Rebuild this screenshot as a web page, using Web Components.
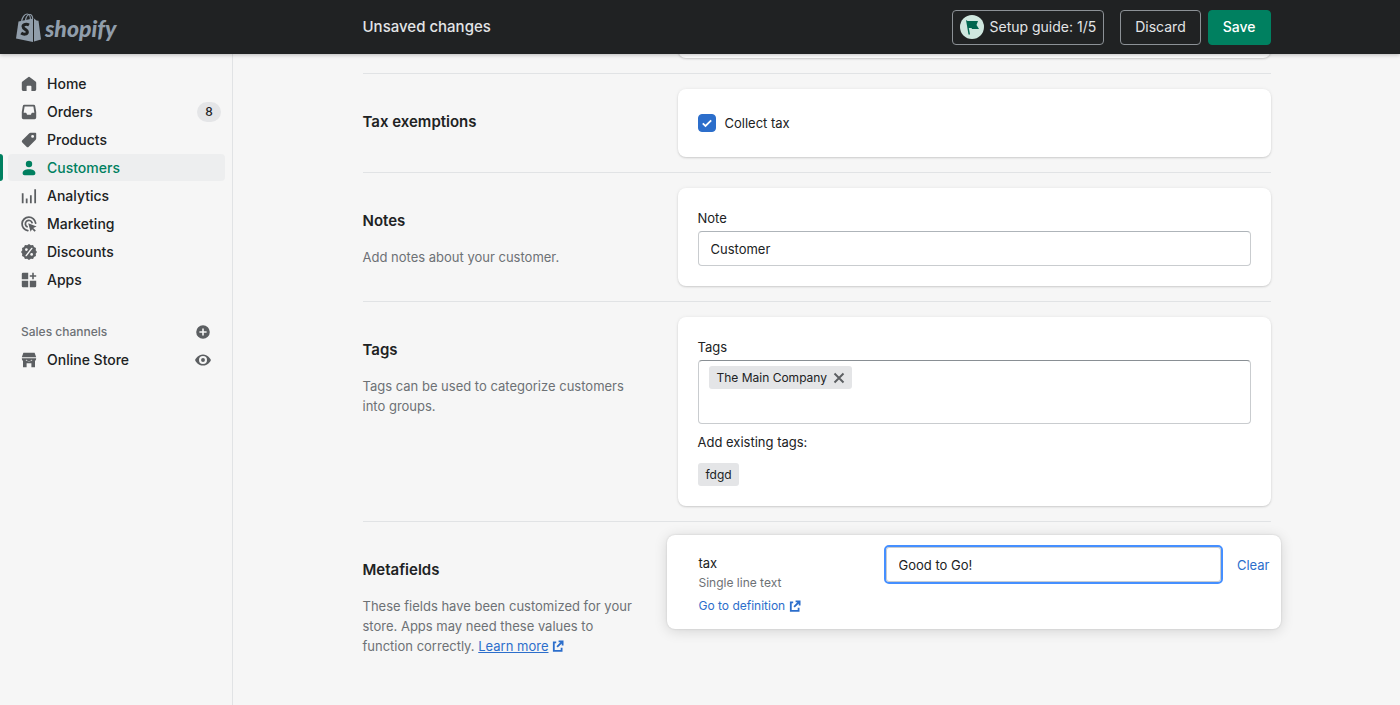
<!DOCTYPE html>
<html lang="en">
<head>
<meta charset="utf-8">
<meta name="viewport" content="width=device-width, initial-scale=1">
<title>Customer · Unsaved changes</title>
<style>
  :root {
    --ink: #202223;
    --subdued: #6d7175;
    --icon: #5c5f62;
    --green: #008060;
    --blue: #2c6ecb;
    --line: #e1e3e5;
    --page: #f6f6f6;
    --chip: #e4e5e7;
    --content: 908px;
    --nav: 233px;
  }
  body {
    margin: 0;
    background: var(--page);
    color: var(--ink);
    font: 13px/20px Inter, "Liberation Sans", sans-serif;
  }
</style>
</head>
<body>

<admin-frame>
  <top-bar slot="top" heading="Unsaved changes"></top-bar>

  <side-nav slot="nav">
    <nav-item icon="home">Home</nav-item>
    <nav-item icon="orders" badge="8">Orders</nav-item>
    <nav-item icon="products">Products</nav-item>
    <nav-item icon="customers" current>Customers</nav-item>
    <nav-item icon="analytics">Analytics</nav-item>
    <nav-item icon="marketing">Marketing</nav-item>
    <nav-item icon="discounts">Discounts</nav-item>
    <nav-item icon="apps">Apps</nav-item>
    <nav-heading slot="channels" action="Add sales channel">Sales channels</nav-heading>
    <nav-item slot="channels" icon="store" action="View your online store">Online Store</nav-item>
  </side-nav>

  <ui-card class="previous" empty></ui-card>

  <annotated-section heading="Tax exemptions">
    <ui-card roomy><check-field label="Collect tax"></check-field></ui-card>
  </annotated-section>

  <annotated-section heading="Notes">
    <span slot="about">Add notes about your customer.</span>
    <ui-card><text-field label="Note" value="Customer"></text-field></ui-card>
  </annotated-section>

  <annotated-section heading="Tags">
    <span slot="about">Tags can be used to categorize customers into groups.</span>
    <ui-card>
      <tag-field label="Tags">
        <tag-chip removable>The Main Company</tag-chip>
        <span slot="hint">Add existing tags:</span>
        <tag-chip slot="existing">fdgd</tag-chip>
      </tag-field>
    </ui-card>
  </annotated-section>

  <annotated-section heading="Metafields">
    <span slot="about">These fields have been customized for your store. Apps may need these values to function correctly.&#32;</span>
    <ext-link slot="about" underlined label="Learn more"></ext-link>
    <metafield-row name="tax" kind="Single line text" value="Good to Go!"></metafield-row>
  </annotated-section>
</admin-frame>

<script>
  const ICONS = {
    home: '<path d="M10.7 1.3a1.2 1.2 0 0 0-1.4 0L1.8 6.8A2 2 0 0 0 1 8.4V17a1.6 1.6 0 0 0 1.6 1.6H7v-5.4a1 1 0 0 1 1-1h4a1 1 0 0 1 1 1v5.4h4.4A1.6 1.6 0 0 0 19 17V8.4a2 2 0 0 0-.8-1.6z"/>',
    orders: '<path fill-rule="evenodd" d="M4.2 1h11.6A2 2 0 0 1 17.800 2.700L19 10v7a2 2 0 0 1-2 2H3a2 2 0 0 1-2-2v-7l1.200-7.300A2 2 0 0 1 4.200 1zM4.500 3.200 3.300 11H6a1 1 0 0 1 1 .8l.3 1a1 1 0 0 0 1 .7h3.400a1 1 0 0 0 1-.7l.3-1a1 1 0 0 1 1-.8h2.700l-1.200-7.800z"/>',
    products: '<path fill-rule="evenodd" d="M10.400 1.600A2 2 0 0 1 11.800 1H18a1 1 0 0 1 1 1v6.200a2 2 0 0 1-.6 1.400l-8.700 8.800a2 2 0 0 1-2.800 0l-5.300-5.300a2 2 0 0 1 0-2.800zM14.500 7.300a1.800 1.800 0 1 0 0-3.600 1.800 1.800 0 0 0 0 3.600z"/>',
    customers: '<circle cx="10" cy="5" r="4"/><path d="M2 16.500c0-3.500 3.500-5 8-5s8 1.500 8 5c0 1.500-1 2.500-2.500 2.500h-11C3 19 2 18 2 16.500z"/>',
    analytics: '<path d="M1 6.500h2.200V19H1zM6 13h2.200v6H6zM11.200 9h2.200v10h-2.200zM16.600 1.500h2.200V19h-2.200z"/>',
    marketing: '<g fill="none" stroke="currentColor" stroke-width="2.200" stroke-linecap="round"><path d="M8.500 18.300A8.500 8.500 0 1 1 18.300 9"/><path d="M7.600 13.500A4.300 4.300 0 1 1 13.800 8.300"/></g><path d="m9 9 10.500 4-4.200 2 3.200 3.200-1.500 1.500-3.200-3.200L12 19.800z"/>',
    discounts: '<path d="m10 0 2.300 1.600 2.800-.3 1.100 2.500 2.500 1.100-.3 2.800L20 10l-1.600 2.300.3 2.800-2.500 1.100-1.100 2.500-2.800-.3L10 20l-2.300-1.600-2.800.3-1.100-2.500-2.500-1.100.3-2.800L0 10l1.600-2.300-.3-2.800 2.500-1.100 1.100-2.500 2.800.3z"/><g stroke="#f6f6f6" stroke-width="1.800" stroke-linecap="round"><path d="m6.500 14.500 7-9"/></g><circle cx="6.700" cy="7" r="1.700" fill="#f6f6f6"/><circle cx="13.300" cy="13" r="1.700" fill="#f6f6f6"/>',
    apps: '<path d="M2.500 1H9v8H1V2.500A1.500 1.500 0 0 1 2.500 1zM1 11h8v8H2.500A1.500 1.500 0 0 1 1 17.500zM11 11h8v6.500a1.500 1.500 0 0 1-1.500 1.500H11zM14 1h2v3h3v2h-3v3h-2V6h-3V4h3z"/>',
    store: '<path d="M3 1h14l2 5.500H1zM1 7.800h18c0 2.200-1.300 3.700-3 3.700s-3-1-3-2.500c0 1.500-1.300 2.500-3 2.500S7 10.500 7 9c0 1.500-1.300 2.500-3 2.500s-3-1.500-3-3.700z"/><path d="M2.500 11h4l3.500 1 3.500-1h4v8H13v-5H7v5H2.500z"/>',
    plus: '<path fill-rule="evenodd" d="M10 1.500a8.500 8.500 0 1 0 0 17 8.500 8.500 0 0 0 0-17zM9 5.500h2V9h3.500v2H11v3.500H9V11H5.500V9H9z"/>',
    eye: '<path fill-rule="evenodd" d="M10 3C4 3 .8 8.300.3 9.500a1.200 1.200 0 0 0 0 1C.8 11.700 4 17 10 17s9.200-5.300 9.700-6.500a1.200 1.200 0 0 0 0-1C19.200 8.300 16 3 10 3zm0 12a5 5 0 1 1 0-10 5 5 0 0 1 0 10z"/><circle cx="10" cy="10" r="2.400"/>',
    close: '<path d="m2.500 2.500 15 15m0-15-15 15" fill="none" stroke="currentColor" stroke-width="3.200"/>',
    external: '<g fill="none" stroke="currentColor" stroke-width="3"><path d="M7 4H3v14h13v-5"/><path d="M11 2.300h6.700V9M17.500 2.500 8.500 11.500"/></g>',
    check: '<path d="m3 10.500 4.500 4.500L17 5.500" fill="none" stroke="currentColor" stroke-width="3"/>'
  };
  const icon = (name, size = 16) =>
    `<svg viewBox="0 0 20 20" width="${size}" height="${size}" fill="currentColor" aria-hidden="true">${ICONS[name]}</svg>`;

  const define = (tag, render) => customElements.define(tag, class extends HTMLElement {
    constructor() {
      super();
      this.attachShadow({ mode: 'open' });
    }
    connectedCallback() {
      const attr = (name) => this.getAttribute(name) ?? '';
      this.shadowRoot.innerHTML = '<style>*{box-sizing:border-box}svg{display:block;flex:none}button,input{font:inherit;color:inherit}</style>' + render(attr, this);
    }
  });

  define('admin-frame', () => `
    <style>
      :host { display: grid; grid-template: 54px 1fr / var(--nav) 1fr; min-height: 100vh; }
      header { grid-column: 1 / -1; position: sticky; top: 0; z-index: 2; }
      aside { border-right: 1px solid var(--line); }
      main { padding: 0 20px; }
      .column { max-width: var(--content); margin: 0 auto; }
      ::slotted(.previous) { height: 24px; margin: -20px 0 15px 315px; }
    </style>
    <header><slot name="top"></slot></header>
    <aside><slot name="nav"></slot></aside>
    <main><div class="column"><slot></slot></div></main>`);

  define('top-bar', (attr) => `
    <style>
      :host { display: grid; grid-template-columns: var(--nav) 1fr; align-items: center; height: 54px;
              background: var(--ink); color: #e3e5e7; box-shadow: 0 1px 4px rgba(0,0,0,.25); }
      .brand { display: flex; align-items: center; gap: 4px; padding-left: 16px; color: #919eab; text-decoration: none;
               font: italic 900 23px/28px Lato, sans-serif; }
      .brand span { padding-top: 2px; }
      .area { padding: 0 20px; }
      .bar { display: flex; align-items: center; max-width: var(--content); margin: 0 auto; }
      h1 { flex: 1; margin: 0; font-size: 15px; line-height: 24px; font-weight: 500; }
      button { display: flex; align-items: center; height: 35px; border: 1px solid #8c9196; border-radius: 4px;
               padding: 0 14px; background: none; font-size: 14px; white-space: nowrap; }
      .guide { gap: 5px; padding: 0 7px; margin-right: 16px; }
      .save { margin-left: 7px; border-color: var(--green); background: var(--green); color: #fff; font-weight: 500; }
    </style>
    <a class="brand" href="#">
      <svg viewBox="0 0 25 29" width="25" height="29" aria-hidden="true">
        <path d="M2.500 8.500 17 5.500V29L0 25.500z" fill="#919eab"/>
        <path d="m18 5.500 2.500 2 2 .3L25 26.500 18 28.500z" fill="#919eab"/>
        <path d="M5.500 9C6 4.500 8.500 1 11 1c2.300 0 3.500 3 3.500 6M9.500 7.500C10 4 12 1.500 14 1.500c1.500 0 2.500 2 2.800 4.500" fill="none" stroke="#919eab" stroke-width="1.200"/>
        <path d="M13 12c-2.500-1.300-6-.8-6 1.600 0 2.900 4.600 2.600 4.400 5.400-.2 2.600-3.800 2.700-6.200 1" fill="none" stroke="#202223" stroke-width="3"/>
      </svg>
      <span>shopify</span>
    </a>
    <div class="area"><div class="bar">
      <h1>${attr('heading')}</h1>
      <button class="guide" type="button">
        <svg viewBox="0 0 24 24" width="24" height="24" aria-hidden="true">
          <circle cx="12" cy="12" r="12" fill="#cfe7df"/>
          <path d="m6 5 1.500 1H18l-1.500 4L19 14h-7l-.5-1H8.800l1.200 6.500H8.500z" fill="#00664f"/>
        </svg>
        Setup guide: 1/5
      </button>
      <button type="button">Discard</button>
      <button class="save" type="button">Save</button>
    </div></div>`);

  define('side-nav', () => `
    <style>
      :host { display: block; padding-top: 16px; }
      nav { display: grid; gap: 1px; }
      nav + nav { margin-top: 25px; }
    </style>
    <nav aria-label="Main"><slot></slot></nav>
    <nav aria-label="Sales channels"><slot name="channels"></slot></nav>`);

  define('nav-item', (attr, el) => `
    <style>
      :host { display: flex; align-items: center; height: 27px; margin-right: 7px; padding-left: 8px; position: relative; }
      a { flex: 1; display: flex; align-items: center; gap: 10px; height: 27px; padding: 0 4px 0 13px; border-radius: 4px;
          color: inherit; text-decoration: none; font-size: 14px; font-weight: 500; }
      a svg { color: var(--icon); }
      .label { flex: 1; }
      .badge { min-width: 24px; padding: 0 8px; border-radius: 10px; background: var(--chip); font-size: 12px; text-align: center; }
      button { display: flex; border: 0; padding: 0; margin-right: 14px; background: none; color: var(--icon); }
      :host([current]) a { background: #edeeef; color: var(--green); }
      :host([current]) a svg { color: inherit; }
      :host([current])::before { content: ""; position: absolute; left: 0; top: 0; bottom: 0; width: 3px;
          border-radius: 0 4px 4px 0; background: var(--green); }
    </style>
    <a href="#"${el.hasAttribute('current') ? ' aria-current="page"' : ''}>${icon(attr('icon'))}<span class="label"><slot></slot></span>${attr('badge') ? `<span class="badge">${attr('badge')}</span>` : ''}</a>
    ${attr('action') ? `<button type="button" aria-label="${attr('action')}">${icon('eye')}</button>` : ''}`);

  define('nav-heading', (attr) => `
    <style>
      :host { display: flex; align-items: center; justify-content: space-between; height: 27px; padding: 0 21px;
              color: var(--subdued); font-size: 12px; font-weight: 500; }
      button { display: flex; border: 0; padding: 0; background: none; color: var(--icon); }
    </style>
    <span><slot></slot></span>
    <button type="button" aria-label="${attr('action')}">${icon('plus')}</button>`);

  define('annotated-section', (attr) => `
    <style>
      :host { display: grid; grid-template-columns: 295px minmax(0, 1fr); gap: 20px; padding: 15px 0;
              border-top: 1px solid var(--line); }
      .about { padding: 21px 20px 0 0; color: var(--subdued); }
      h2 { margin: 0 0 14px; color: var(--ink); font-size: 15px; line-height: 24px; font-weight: 600; }
    </style>
    <div class="about"><h2>${attr('heading')}</h2><slot name="about"></slot></div>
    <div><slot></slot></div>`);

  define('ui-card', () => `
    <style>
      :host { display: block; box-sizing: border-box; padding: 20px; border-radius: 8px; background: #fff;
              box-shadow: 0 0 4px rgba(23,24,24,.05), 0 1px 2px rgba(0,0,0,.15); }
      :host([roomy]) { padding: 24px 20px; }
      :host([empty]) { padding: 0; }
    </style><slot></slot>`);

  define('check-field', (attr) => `
    <style>
      :host { display: block; }
      label { display: flex; align-items: center; gap: 9px; }
      .box { display: grid; place-items: center; width: 18px; color: #fff; }
      .box > * { grid-area: 1 / 1; }
      input { appearance: none; width: 18px; height: 18px; margin: 0; border-radius: 4px; border: 1px solid #8c9196; }
      input:checked { background: var(--blue); border-color: var(--blue); }
      svg { pointer-events: none; }
    </style>
    <label><span class="box"><input type="checkbox" checked>${icon('check', 12)}</span>${attr('label')}</label>`);

  define('text-field', (attr) => `
    <style>
      :host { display: block; }
      label { display: block; margin-bottom: 3px; }
      input { display: block; width: 100%; height: 35px; padding: 0 12px; border: 1px solid #c9cccf; border-top-color: #aeb4b9;
              border-radius: 4px; background: #fff; }
    </style>
    <label for="field">${attr('label')}</label>
    <input id="field" type="text" value="${attr('value')}">`);

  define('tag-field', (attr) => `
    <style>
      :host { display: block; }
      label { display: block; margin-bottom: 3px; }
      .box { display: flex; flex-wrap: wrap; align-content: flex-start; gap: 2px 8px; height: 64px; padding: 5px 10px;
             border: 1px solid #c9cccf; border-top-color: #898f94; border-radius: 4px; }
      input { flex: 1; min-width: 80px; height: 23px; border: 0; padding: 0; background: none; outline: 0; }
      .hint { margin: 8px 0 11px; }
      .existing { display: flex; gap: 8px; }
    </style>
    <label for="tags">${attr('label')}</label>
    <div class="box"><slot></slot><input id="tags" type="text"></div>
    <div class="hint"><slot name="hint"></slot></div>
    <div class="existing"><slot name="existing"></slot></div>`);

  define('tag-chip', (attr, el) => `
    <style>
      :host { display: inline-flex; align-items: center; gap: 6px; height: 23px; padding: 0 7px 0 8px; border-radius: 3px;
              background: var(--chip); font-size: 12px; }
      button { display: flex; border: 0; padding: 0; background: none; color: var(--icon); }
    </style>
    <span><slot></slot></span>${el.hasAttribute('removable') ? `<button type="button" aria-label="Remove tag">${icon('close', 12)}</button>` : ''}`);

  define('ext-link', (attr) => `
    <style>
      :host { display: inline-block; white-space: nowrap; }
      a { display: flex; align-items: center; gap: 4px; color: var(--blue); text-decoration: none; }
      :host([underlined]) span { text-decoration: underline; }
    </style><a href="#"><span>${attr('label')}</span>${icon('external', 12)}</a>`);

  define('metafield-row', (attr) => `
    <style>
      :host { display: flex; align-items: flex-start; height: 94px; margin: -2px -10px 0 -11px; padding: 12px 11px 12px 32px;
              box-sizing: border-box; border-radius: 8px; background: #fff;
              box-shadow: 0 0 2px rgba(0,0,0,.15), 0 2px 14px rgba(0,0,0,.14); }
      .about { flex: none; width: 187px; padding-top: 6px; font-size: 12px; }
      label { display: block; font-size: 13px; }
      .kind { color: var(--subdued); margin-bottom: 3px; }
      input { flex: 1; min-width: 0; height: 35px; padding: 0 12px; border: 1px solid #c9cccf; border-radius: 3px;
              background: #fff; outline: 2px solid #458fff; }
      button { height: 35px; margin-left: 16px; border: 0; padding: 0; background: none; color: var(--blue); }
    </style>
    <div class="about">
      <label for="value">${attr('name')}</label>
      <div class="kind">${attr('kind')}</div>
      <ext-link label="Go to definition"></ext-link>
    </div>
    <input id="value" type="text" value="${attr('value')}">
    <button type="button">Clear</button>`);
</script>
</body>
</html>
